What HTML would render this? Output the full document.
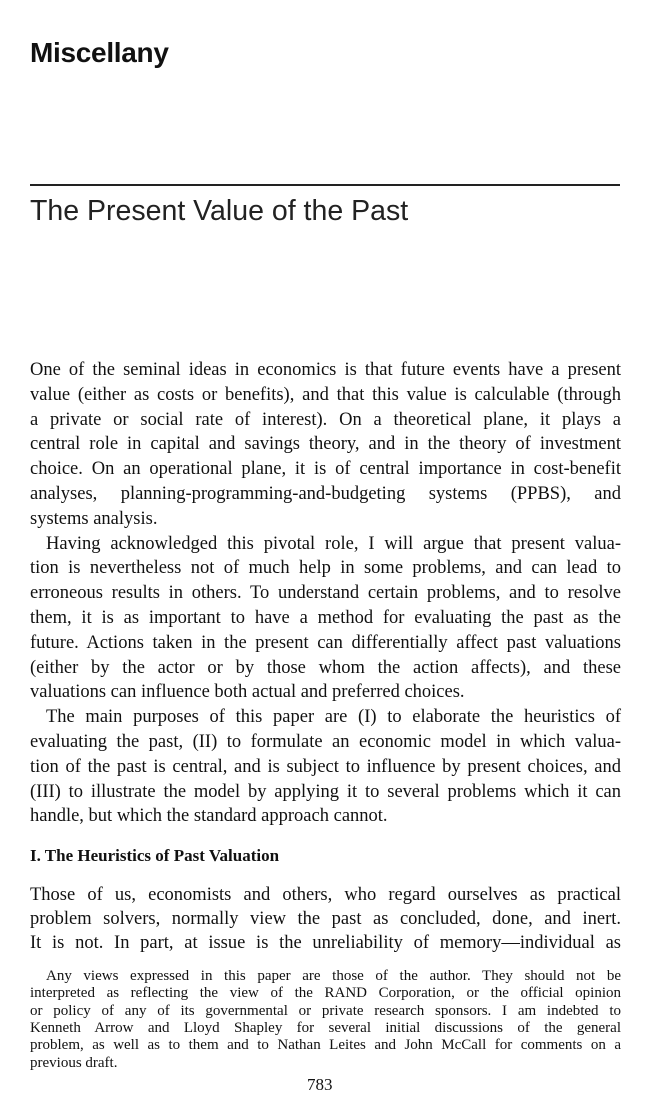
<!DOCTYPE html>
<html><head><meta charset="utf-8"><style>
body{margin:0;background:#fff;width:650px;height:1102px;position:relative;overflow:hidden;color:#111;}
.abs{position:absolute;}
.l{position:absolute;left:30px;width:591px;font-family:"Liberation Serif",serif;font-size:18.5px;white-space:nowrap;text-align:justify;text-align-last:justify;}
.l.e{text-align-last:left;}
.i{left:46px;width:575px;}
.f{position:absolute;left:30px;width:591px;font-family:"Liberation Serif",serif;font-size:15px;white-space:nowrap;text-align:justify;text-align-last:justify;}
</style></head><body>
<div class="abs" style="left:30px;top:37px;font-family:'Liberation Sans',sans-serif;font-weight:bold;font-size:28px;letter-spacing:-0.3px;">Miscellany</div>
<div class="abs" style="left:30px;top:184px;width:590px;height:1.5px;background:#222;"></div>
<div class="abs" style="left:30px;top:195px;font-family:'Liberation Sans',sans-serif;font-size:28.5px;color:#222;">The Present Value of the Past</div>
<div class="l" style="top:360px">One of the seminal ideas in economics is that future events have a present</div>
<div class="l" style="top:384.8px">value (either as costs or benefits), and that this value is calculable (through</div>
<div class="l" style="top:409.6px">a private or social rate of interest). On a theoretical plane, it plays a</div>
<div class="l" style="top:434.4px">central role in capital and savings theory, and in the theory of investment</div>
<div class="l" style="top:459.2px">choice. On an operational plane, it is of central importance in cost-benefit</div>
<div class="l" style="top:484px">analyses, planning-programming-and-budgeting systems (PPBS), and</div>
<div class="l e" style="top:508.8px">systems analysis.</div>
<div class="l i" style="top:533.6px">Having acknowledged this pivotal role, I will argue that present valua-</div>
<div class="l" style="top:558.4px">tion is nevertheless not of much help in some problems, and can lead to</div>
<div class="l" style="top:583.2px">erroneous results in others. To understand certain problems, and to resolve</div>
<div class="l" style="top:608px">them, it is as important to have a method for evaluating the past as the</div>
<div class="l" style="top:632.8px">future. Actions taken in the present can differentially affect past valuations</div>
<div class="l" style="top:657.6px">(either by the actor or by those whom the action affects), and these</div>
<div class="l e" style="top:682.4px">valuations can influence both actual and preferred choices.</div>
<div class="l i" style="top:707.2px">The main purposes of this paper are (I) to elaborate the heuristics of</div>
<div class="l" style="top:732px">evaluating the past, (II) to formulate an economic model in which valua-</div>
<div class="l" style="top:756.8px">tion of the past is central, and is subject to influence by present choices, and</div>
<div class="l" style="top:781.6px">(III) to illustrate the model by applying it to several problems which it can</div>
<div class="l e" style="top:806.4px">handle, but which the standard approach cannot.</div>
<div class="abs" style="left:30px;top:846px;font-family:'Liberation Serif',serif;font-weight:bold;font-size:17px;">I. The Heuristics of Past Valuation</div>
<div class="l" style="top:885px">Those of us, economists and others, who regard ourselves as practical</div>
<div class="l" style="top:909px">problem solvers, normally view the past as concluded, done, and inert.</div>
<div class="l" style="top:933px">It is not. In part, at issue is the unreliability of memory—individual as</div>
<div class="f" style="top:968px;left:46px;width:575px">Any views expressed in this paper are those of the author. They should not be</div>
<div class="f" style="top:985.3px">interpreted as reflecting the view of the RAND Corporation, or the official opinion</div>
<div class="f" style="top:1002.6px">or policy of any of its governmental or private research sponsors. I am indebted to</div>
<div class="f" style="top:1019.9px">Kenneth Arrow and Lloyd Shapley for several initial discussions of the general</div>
<div class="f" style="top:1037.2px">problem, as well as to them and to Nathan Leites and John McCall for comments on a</div>
<div class="f" style="top:1054.5px;text-align-last:left">previous draft.</div>
<div class="abs" style="left:307px;top:1075px;font-family:'Liberation Serif',serif;font-size:17px;">783</div>
</body></html>
